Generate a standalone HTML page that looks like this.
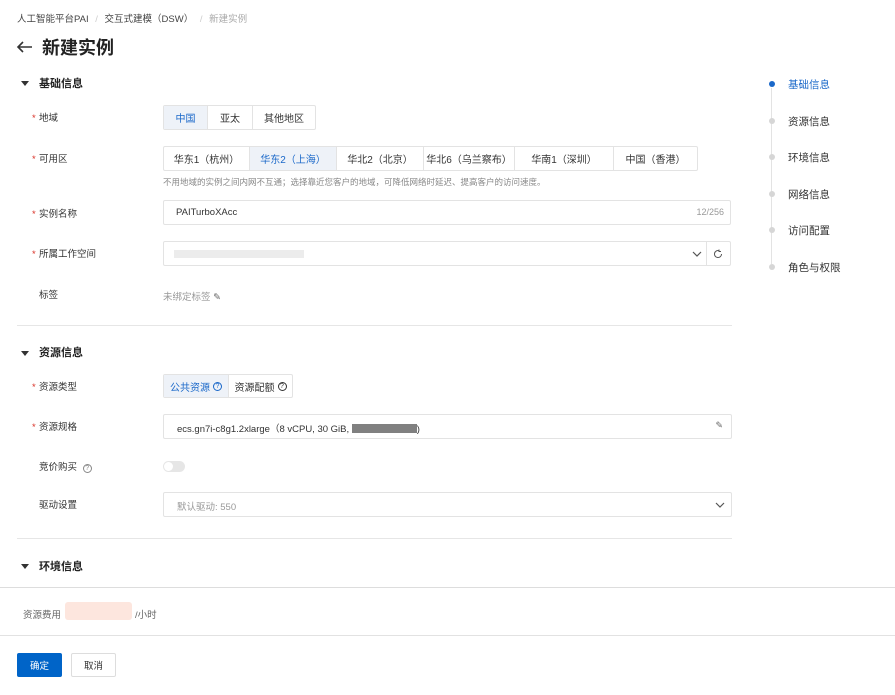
<!DOCTYPE html>
<html><head><meta charset="utf-8"><style>
*{box-sizing:border-box;margin:0;padding:0}
body{width:895px;height:695px;background:#fff;font-family:"Liberation Sans","Noto Sans CJK SC",sans-serif;color:#333;font-size:10px;position:relative;overflow:hidden}
.a{position:absolute;white-space:nowrap}
.lbl{position:absolute;left:39px;font-size:9.5px;color:#333;line-height:12px;margin-top:2px}
.req::before{content:"*";color:#d93026;position:absolute;left:-7px;top:0}
.sec{position:absolute;left:39px;font-size:11px;font-weight:bold;color:#222;line-height:14px;margin-top:1px}
.tri{position:absolute;left:21px;width:0;height:0;border-left:4px solid transparent;border-right:4px solid transparent;border-top:5px solid #333}
.box{position:absolute;border:1px solid #e3e3e3;background:#fff;border-radius:2px}
.seg{position:absolute;display:flex;border:1px solid #e3e3e3;border-radius:2px;background:#fff}
.seg div{display:flex;align-items:center;justify-content:center;font-size:10px;color:#333;border-right:1px solid #e3e3e3}
.seg div:last-child{border-right:none}
.seg .on{background:#eef2f8;color:#1a68c9}
.hr{position:absolute;height:1px;background:#e6e6e6}
.nav{position:absolute;left:788px;font-size:10.5px;color:#333;line-height:12px;margin-top:1px}
.dot{position:absolute;left:769px;width:6px;height:6px;border-radius:50%;background:#d6d6d6}
.q{display:inline-block;width:9px;height:9px;border:1px solid currentColor;border-radius:50%;font-size:7px;line-height:7px;text-align:center;margin-left:3px;vertical-align:0}
</style></head><body>
<div class="a" style="left:17px;top:11px;font-size:9.5px;color:#444">人工智能平台PAI <span style="color:#ccc;margin:0 4px">/</span> 交互式建模（DSW） <span style="color:#ccc;margin:0 4px">/</span> <span style="color:#aaa">新建实例</span></div>
<svg class="a" style="left:16px;top:40px" width="18" height="14" viewBox="0 0 18 14"><path d="M16 7H2M7 2L2 7l5 5" fill="none" stroke="#333" stroke-width="1.6"/></svg>
<div class="a" style="left:42px;top:37px;font-size:18px;font-weight:bold;color:#222;line-height:22px">新建实例</div>

<div class="tri" style="top:81px"></div><div class="sec" style="top:76px">基础信息</div>
<div class="lbl req" style="top:111px">地域</div>
<div class="seg" style="left:163px;top:105px;height:25px"><div class="on" style="width:44px">中国</div><div style="width:45px">亚太</div><div style="width:62px">其他地区</div></div>
<div class="lbl req" style="top:152px">可用区</div>
<div class="seg" style="left:163px;top:146px;height:25px"><div style="width:86px">华东1（杭州）</div><div class="on" style="width:87px">华东2（上海）</div><div style="width:87px">华北2（北京）</div><div style="width:91px">华北6（乌兰察布）</div><div style="width:99px">华南1（深圳）</div><div style="width:83px">中国（香港）</div></div>
<div class="a" style="left:163px;top:176px;font-size:8.5px;color:#888">不用地域的实例之间内网不互通；选择靠近您客户的地域，可降低网络时延迟、提高客户的访问速度。</div>
<div class="lbl req" style="top:207px">实例名称</div>
<div class="box" style="left:163px;top:200px;width:568px;height:25px"><span class="a" style="left:12px;top:6px;font-size:9.5px">PAITurboXAcc</span><span class="a" style="right:6px;top:6px;font-size:9px;color:#999">12/256</span></div>
<div class="lbl req" style="top:247px">所属工作空间</div>
<div class="box" style="left:163px;top:241px;width:568px;height:25px"><span class="a" style="left:10px;top:8px;width:130px;height:8px;background:#ececec"></span><svg class="a" style="left:528px;top:8px" width="10" height="8"><path d="M1 2l4 4 4-4" fill="none" stroke="#555" stroke-width="1.2"/></svg><span class="a" style="left:542px;top:0;width:1px;height:23px;background:#e3e3e3"></span><svg class="a" style="left:549px;top:7px" width="10" height="10" viewBox="0 0 10 10"><path d="M8.5 5A3.5 3.5 0 1 1 6 1.7M6 0.5v2h2" fill="none" stroke="#555" stroke-width="1"/></svg></div>
<div class="lbl" style="top:288px">标签</div>
<div class="a" style="left:163px;top:289px;font-size:9.5px;color:#999">未绑定标签 <span style="color:#666">✎</span></div>
<div class="hr" style="left:17px;top:325px;width:715px"></div>

<div class="tri" style="top:351px"></div><div class="sec" style="top:345px">资源信息</div>
<div class="lbl req" style="top:380px">资源类型</div>
<div class="seg" style="left:163px;top:374px;height:24px"><div class="on" style="width:65px">公共资源<span class="q">?</span></div><div style="width:63px">资源配额<span class="q">?</span></div></div>
<div class="lbl req" style="top:420px">资源规格</div>
<div class="box" style="left:163px;top:414px;width:569px;height:25px"><span class="a" style="left:13px;top:6px;font-size:9.5px">ecs.gn7i-c8g1.2xlarge（8 vCPU, 30 GiB, <span style="display:inline-block;width:65px;height:9px;background:#808080;vertical-align:-1px"></span>)</span><span class="a" style="right:8px;top:5px;font-size:9px;color:#666">✎</span></div>
<div class="lbl" style="top:460px">竞价购买 <span class="q" style="color:#888">?</span></div>
<div class="a" style="left:163px;top:461px;width:22px;height:11px;border-radius:6px;background:#e6e6e6"><div class="a" style="left:1px;top:1px;width:9px;height:9px;border-radius:50%;background:#fff"></div></div>
<div class="lbl" style="top:498px">驱动设置</div>
<div class="box" style="left:163px;top:492px;width:569px;height:25px"><span class="a" style="left:13px;top:6px;font-size:9.5px;color:#999">默认驱动: 550</span><svg class="a" style="left:551px;top:8px" width="10" height="8"><path d="M1 2l4 4 4-4" fill="none" stroke="#555" stroke-width="1.2"/></svg></div>
<div class="hr" style="left:17px;top:538px;width:715px"></div>

<div class="tri" style="top:564px"></div><div class="sec" style="top:559px">环境信息</div>
<div class="hr" style="left:0;top:587px;width:895px;background:#ddd"></div>
<div class="a" style="left:23px;top:607px;font-size:9.5px;color:#666">资源费用</div>
<div class="a" style="left:65px;top:602px;width:67px;height:18px;background:#fde6de;border-radius:3px"></div>
<div class="a" style="left:135px;top:607px;font-size:9.5px;color:#666">/小时</div>
<div class="hr" style="left:0;top:635px;width:895px;background:#e2e2e2"></div>
<div class="a" style="left:17px;top:653px;width:45px;height:24px;background:#0064c8;color:#fff;font-size:9.5px;display:flex;align-items:center;justify-content:center;border-radius:2px">确定</div>
<div class="a" style="left:71px;top:653px;width:45px;height:24px;border:1px solid #ddd;color:#333;font-size:9.5px;display:flex;align-items:center;justify-content:center;border-radius:2px">取消</div>

<div class="a" style="left:771px;top:88px;width:1px;height:176px;background:#e3e3e3"></div>
<div class="dot" style="top:81px;background:#1a68c9"></div><div class="nav" style="top:78px;color:#1a68c9">基础信息</div>
<div class="dot" style="top:118px"></div><div class="nav" style="top:115px">资源信息</div>
<div class="dot" style="top:154px"></div><div class="nav" style="top:151px">环境信息</div>
<div class="dot" style="top:191px"></div><div class="nav" style="top:188px">网络信息</div>
<div class="dot" style="top:227px"></div><div class="nav" style="top:224px">访问配置</div>
<div class="dot" style="top:264px"></div><div class="nav" style="top:261px">角色与权限</div>
</body></html>
